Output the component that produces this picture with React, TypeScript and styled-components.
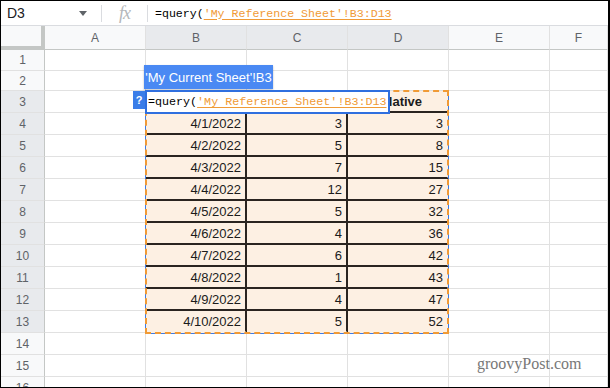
import React from 'react';
import styled, { createGlobalStyle, css } from 'styled-components';

const GlobalStyle = createGlobalStyle`
  html, body {
    margin: 0;
    padding: 0;
    background: #ffffff;
  }
`;

const SFrame = styled.div`
  width: 610px;
  height: 388px;
  box-sizing: border-box;
  border: 1px solid #000;
  border-right-width: 2px;
  overflow: hidden;
  font-family: 'Liberation Sans', Arial, sans-serif;
  color: #202124;
  background: #fff;
`;

const SFormulaBar = styled.div`
  height: 24px;
  border-bottom: 1px solid #dadce0;
  display: flex;
  align-items: center;
`;

const SNameBox = styled.div`
  width: 100px;
  display: flex;
  align-items: center;
  justify-content: space-between;
  padding: 0 14px 0 6px;
  box-sizing: border-box;
  font-size: 14px;
`;

const SDivider = styled.div`
  width: 1px;
  height: 17px;
  background: #dadce0;
`;

const SFx = styled.div`
  width: 45px;
  text-align: center;
  font-family: 'Liberation Serif', serif;
  font-style: italic;
  font-size: 18px;
  color: #b4b7ba;
  letter-spacing: -1px;
`;

const SFormula = styled.div<{ size: number }>`
  padding-left: 7px;
  font-family: 'Liberation Mono', 'DejaVu Sans Mono', monospace;
  font-size: ${({ size }) => size}px;
  white-space: nowrap;
  color: #000;
`;

const SRef = styled.span`
  color: #f09a36;
  text-decoration: underline;
  text-underline-offset: 2px;
`;

const SSheet = styled.div`
  position: relative;
  display: grid;
  grid-template-columns: 44px repeat(5, 101px) 1fr;
  grid-template-rows: 24px 21px 20px repeat(14, 22px);
`;

const cellLines = css`
  box-sizing: border-box;
  border-right: 1px solid #e1e1e1;
  border-bottom: 1px solid #e1e1e1;
`;

const SCorner = styled.div`
  box-sizing: border-box;
  background: #f8f9fa;
  border-right: 4px solid #c4c7c5;
  border-bottom: 4px solid #c4c7c5;
`;

const SColHeader = styled.div<{ active?: boolean }>`
  ${cellLines};
  background: ${({ active }) => (active ? '#e8eaed' : '#f8f9fa')};
  border-bottom-color: #c4c7c5;
  color: #5f6368;
  font-size: 12px;
  display: flex;
  align-items: center;
  justify-content: center;
`;

const SRowHeader = styled.div<{ active?: boolean }>`
  ${cellLines};
  background: ${({ active }) => (active ? '#e8eaed' : '#f8f9fa')};
  border-right-color: #c4c7c5;
  color: #5f6368;
  font-size: 12px;
  display: flex;
  align-items: center;
  justify-content: center;
`;

const SCell = styled.div<{ inRange?: boolean; edgeRight?: boolean; edgeBottom?: boolean; head?: boolean }>`
  ${cellLines};
  font-size: 13px;
  display: flex;
  align-items: center;
  justify-content: ${({ head }) => (head ? 'flex-start' : 'flex-end')};
  padding: 0 4px;
  white-space: nowrap;
  overflow: hidden;
  font-weight: ${({ head }) => (head ? 700 : 400)};
  color: #1b1b1b;

  ${({ inRange, edgeRight, edgeBottom }) =>
    inRange &&
    css`
      background: #fdf0e3;
      border-right: 2px solid ${edgeRight ? 'transparent' : '#2a2420'};
      border-bottom: 2px solid ${edgeBottom ? 'transparent' : '#2a2420'};
    `}
`;

const SRangeBase = styled.div`
  position: absolute;
  left: 144px;
  top: 64px;
  width: 304px;
  height: 244px;
  box-sizing: border-box;
  pointer-events: none;
  border: 1px solid #3d7be6;
  border-top-color: transparent;
`;

const SRangeDash = styled.div`
  position: absolute;
  left: 144px;
  top: 64px;
  width: 304px;
  height: 244px;
  box-sizing: border-box;
  pointer-events: none;
  border: 2px dashed #f09a36;
`;

const SEditor = styled.div`
  position: absolute;
  left: 144px;
  top: 64px;
  width: 245px;
  height: 24px;
  box-sizing: border-box;
  border: 2px solid #2f6fdf;
  background: #fff;
  display: flex;
  align-items: center;
  padding-left: 1px;
  font-family: 'Liberation Mono', 'DejaVu Sans Mono', monospace;
  font-size: 11.7px;
  white-space: nowrap;
  overflow: hidden;
  color: #000;
`;

const SHelp = styled.div`
  position: absolute;
  left: 132px;
  top: 65px;
  width: 12px;
  height: 18px;
  background: #3a7de8;
  color: #fff;
  font-size: 11px;
  font-weight: 700;
  display: flex;
  align-items: center;
  justify-content: center;
`;

const STip = styled.div`
  position: absolute;
  left: 143px;
  top: 39px;
  width: 129px;
  height: 24px;
  background: #4a89f3;
  color: #fff;
  font-size: 13px;
  display: flex;
  align-items: center;
  justify-content: center;
  box-shadow: 0 1px 2px rgba(0, 0, 0, 0.25);
`;

const SWatermark = styled.div`
  position: absolute;
  left: 476px;
  top: 329px;
  font-family: 'Liberation Serif', 'Times New Roman', serif;
  font-size: 16px;
  color: #777;
`;

const columns = ['A', 'B', 'C', 'D', 'E', 'F'];

const rows: [string, string, string][] = [
  ['4/1/2022', '3', '3'],
  ['4/2/2022', '5', '8'],
  ['4/3/2022', '7', '15'],
  ['4/4/2022', '12', '27'],
  ['4/5/2022', '5', '32'],
  ['4/6/2022', '4', '36'],
  ['4/7/2022', '6', '42'],
  ['4/8/2022', '1', '43'],
  ['4/9/2022', '4', '47'],
  ['4/10/2022', '5', '52'],
];

const cellValue = (row: number, col: number) => {
  // col: 0 = A ... 5 = F
  if (row === 3 && col === 3) return 'Cumulative';
  if (row >= 4 && row <= 13 && col >= 1 && col <= 3) return rows[row - 4][col - 1];
  return '';
};

const App = () => {
  const sheetRows = Array.from({ length: 16 }, (_, i) => i + 1);

  return (
    <SFrame>
      <GlobalStyle />

      {/* formula bar */}
      <SFormulaBar>
        <SNameBox>
          <span>D3</span>
          <svg width="8" height="5" viewBox="0 0 8 5">
            <path d="M0 0h8L4 5z" fill="#5f6368" />
          </svg>
        </SNameBox>
        <SDivider />
        <SFx>fx</SFx>
        <SDivider />
        <SFormula size={11.6}>
          =query(<SRef>'My Reference Sheet'!B3:D13</SRef>
        </SFormula>
      </SFormulaBar>

      {/* grid */}
      <SSheet>
        <SCorner />
        {columns.map((c, i) => (
          <SColHeader key={c} active={i >= 1 && i <= 3}>
            {c}
          </SColHeader>
        ))}

        {sheetRows.map((r) => (
          <React.Fragment key={r}>
            <SRowHeader active={r >= 3 && r <= 13}>{r}</SRowHeader>
            {columns.map((c, ci) => {
              const inRange = r >= 3 && r <= 13 && ci >= 1 && ci <= 3;
              return (
                <SCell
                  key={c}
                  inRange={inRange}
                  edgeRight={ci === 3}
                  edgeBottom={r === 13}
                  head={r === 3}
                >
                  {cellValue(r, ci)}
                </SCell>
              );
            })}
          </React.Fragment>
        ))}

        <SRangeBase />
        <SRangeDash />
        <STip>'My Current Sheet'!B3</STip>
        <SHelp>?</SHelp>
        <SEditor>
          =query(<SRef>'My Reference Sheet'!B3:D13</SRef>
        </SEditor>
        <SWatermark>groovyPost.com</SWatermark>
      </SSheet>
    </SFrame>
  );
};

export default App;
